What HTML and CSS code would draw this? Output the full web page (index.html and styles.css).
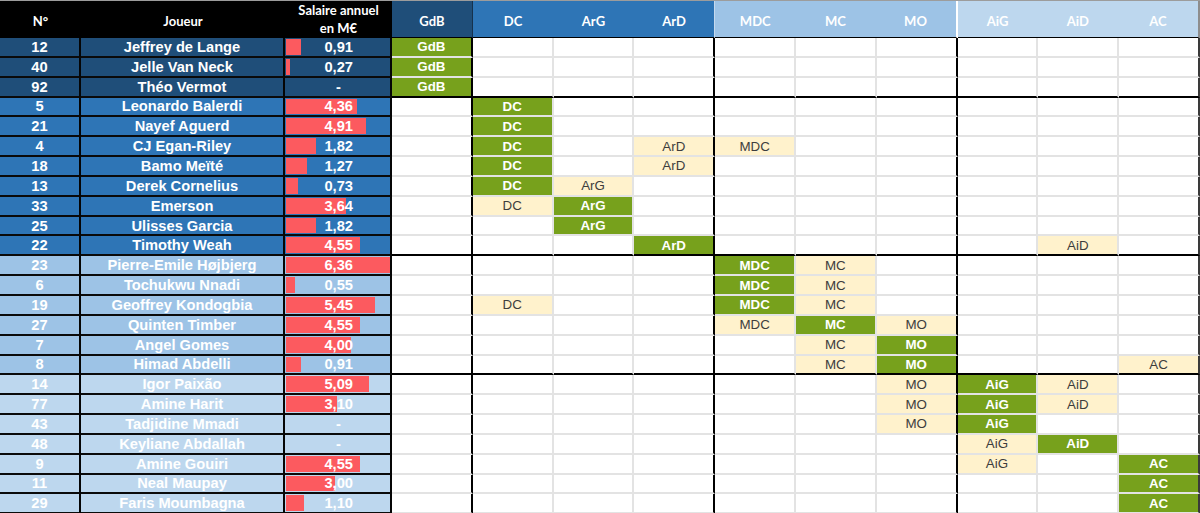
FILE: index.html
```html
<!DOCTYPE html>
<html lang="fr">
<head>
<meta charset="utf-8">
<title>Effectif OM</title>
<link rel="stylesheet" href="styles.css">
</head>
<body>
<div class="sheet">
  <div class="row head">
    <div class="hc">N°</div>
    <div class="hc">Joueur</div>
    <div class="hc sal-h">Salaire annuel<br>en M€</div>
    <div class="hc gdb-h">GdB</div>
    <div class="hg def-h"><span>DC</span><span>ArG</span><span>ArD</span></div>
    <div class="hg mid-h"><span>MDC</span><span>MC</span><span>MO</span></div>
    <div class="hg att-h"><span>AiG</span><span>AiD</span><span>AC</span></div>
  </div>

  <div class="row gk">
    <div class="c">12</div><div class="c">Jeffrey de Lange</div>
    <div class="c sal"><i class="bar" style="width:14.9px"></i><b>0,91</b></div>
    <div class="p g">GdB</div><div class="p"></div><div class="p"></div><div class="p"></div><div class="p"></div><div class="p"></div><div class="p"></div><div class="p"></div><div class="p"></div><div class="p"></div>
  </div>
  <div class="row gk">
    <div class="c">40</div><div class="c">Jelle Van Neck</div>
    <div class="c sal"><i class="bar" style="width:4.4px"></i><b>0,27</b></div>
    <div class="p g">GdB</div><div class="p"></div><div class="p"></div><div class="p"></div><div class="p"></div><div class="p"></div><div class="p"></div><div class="p"></div><div class="p"></div><div class="p"></div>
  </div>
  <div class="row gk end">
    <div class="c">92</div><div class="c">Théo Vermot</div>
    <div class="c sal"><b class="dash">-</b></div>
    <div class="p g">GdB</div><div class="p"></div><div class="p"></div><div class="p"></div><div class="p"></div><div class="p"></div><div class="p"></div><div class="p"></div><div class="p"></div><div class="p"></div>
  </div>

  <div class="row def">
    <div class="c">5</div><div class="c">Leonardo Balerdi</div>
    <div class="c sal"><i class="bar" style="width:71.3px"></i><b>4,36</b></div>
    <div class="p"></div><div class="p g">DC</div><div class="p"></div><div class="p"></div><div class="p"></div><div class="p"></div><div class="p"></div><div class="p"></div><div class="p"></div><div class="p"></div>
  </div>
  <div class="row def">
    <div class="c">21</div><div class="c">Nayef Aguerd</div>
    <div class="c sal"><i class="bar" style="width:80.3px"></i><b>4,91</b></div>
    <div class="p"></div><div class="p g">DC</div><div class="p"></div><div class="p"></div><div class="p"></div><div class="p"></div><div class="p"></div><div class="p"></div><div class="p"></div><div class="p"></div>
  </div>
  <div class="row def">
    <div class="c">4</div><div class="c">CJ Egan-Riley</div>
    <div class="c sal"><i class="bar" style="width:29.8px"></i><b>1,82</b></div>
    <div class="p"></div><div class="p g">DC</div><div class="p"></div><div class="p y">ArD</div><div class="p y">MDC</div><div class="p"></div><div class="p"></div><div class="p"></div><div class="p"></div><div class="p"></div>
  </div>
  <div class="row def">
    <div class="c">18</div><div class="c">Bamo Meïté</div>
    <div class="c sal"><i class="bar" style="width:20.8px"></i><b>1,27</b></div>
    <div class="p"></div><div class="p g">DC</div><div class="p"></div><div class="p y">ArD</div><div class="p"></div><div class="p"></div><div class="p"></div><div class="p"></div><div class="p"></div><div class="p"></div>
  </div>
  <div class="row def">
    <div class="c">13</div><div class="c">Derek Cornelius</div>
    <div class="c sal"><i class="bar" style="width:11.9px"></i><b>0,73</b></div>
    <div class="p"></div><div class="p g">DC</div><div class="p y">ArG</div><div class="p"></div><div class="p"></div><div class="p"></div><div class="p"></div><div class="p"></div><div class="p"></div><div class="p"></div>
  </div>
  <div class="row def">
    <div class="c">33</div><div class="c">Emerson</div>
    <div class="c sal"><i class="bar" style="width:59.5px"></i><b>3,64</b></div>
    <div class="p"></div><div class="p y">DC</div><div class="p g">ArG</div><div class="p"></div><div class="p"></div><div class="p"></div><div class="p"></div><div class="p"></div><div class="p"></div><div class="p"></div>
  </div>
  <div class="row def">
    <div class="c">25</div><div class="c">Ulisses Garcia</div>
    <div class="c sal"><i class="bar" style="width:29.8px"></i><b>1,82</b></div>
    <div class="p"></div><div class="p"></div><div class="p g">ArG</div><div class="p"></div><div class="p"></div><div class="p"></div><div class="p"></div><div class="p"></div><div class="p"></div><div class="p"></div>
  </div>
  <div class="row def end">
    <div class="c">22</div><div class="c">Timothy Weah</div>
    <div class="c sal"><i class="bar" style="width:74.4px"></i><b>4,55</b></div>
    <div class="p"></div><div class="p"></div><div class="p"></div><div class="p g">ArD</div><div class="p"></div><div class="p"></div><div class="p"></div><div class="p"></div><div class="p y">AiD</div><div class="p"></div>
  </div>

  <div class="row mid">
    <div class="c">23</div><div class="c">Pierre-Emile Højbjerg</div>
    <div class="c sal"><i class="bar" style="width:104px"></i><b>6,36</b></div>
    <div class="p"></div><div class="p"></div><div class="p"></div><div class="p"></div><div class="p g">MDC</div><div class="p y">MC</div><div class="p"></div><div class="p"></div><div class="p"></div><div class="p"></div>
  </div>
  <div class="row mid">
    <div class="c">6</div><div class="c">Tochukwu Nnadi</div>
    <div class="c sal"><i class="bar" style="width:9px"></i><b>0,55</b></div>
    <div class="p"></div><div class="p"></div><div class="p"></div><div class="p"></div><div class="p g">MDC</div><div class="p y">MC</div><div class="p"></div><div class="p"></div><div class="p"></div><div class="p"></div>
  </div>
  <div class="row mid">
    <div class="c">19</div><div class="c">Geoffrey Kondogbia</div>
    <div class="c sal"><i class="bar" style="width:89.1px"></i><b>5,45</b></div>
    <div class="p"></div><div class="p y">DC</div><div class="p"></div><div class="p"></div><div class="p g">MDC</div><div class="p y">MC</div><div class="p"></div><div class="p"></div><div class="p"></div><div class="p"></div>
  </div>
  <div class="row mid">
    <div class="c">27</div><div class="c">Quinten Timber</div>
    <div class="c sal"><i class="bar" style="width:74.4px"></i><b>4,55</b></div>
    <div class="p"></div><div class="p"></div><div class="p"></div><div class="p"></div><div class="p y">MDC</div><div class="p g">MC</div><div class="p y">MO</div><div class="p"></div><div class="p"></div><div class="p"></div>
  </div>
  <div class="row mid">
    <div class="c">7</div><div class="c">Angel Gomes</div>
    <div class="c sal"><i class="bar" style="width:65.4px"></i><b>4,00</b></div>
    <div class="p"></div><div class="p"></div><div class="p"></div><div class="p"></div><div class="p"></div><div class="p y">MC</div><div class="p g">MO</div><div class="p"></div><div class="p"></div><div class="p"></div>
  </div>
  <div class="row mid end">
    <div class="c">8</div><div class="c">Himad Abdelli</div>
    <div class="c sal"><i class="bar" style="width:14.9px"></i><b>0,91</b></div>
    <div class="p"></div><div class="p"></div><div class="p"></div><div class="p"></div><div class="p"></div><div class="p y">MC</div><div class="p g">MO</div><div class="p"></div><div class="p"></div><div class="p y">AC</div>
  </div>

  <div class="row att">
    <div class="c">14</div><div class="c">Igor Paixão</div>
    <div class="c sal"><i class="bar" style="width:83.2px"></i><b>5,09</b></div>
    <div class="p"></div><div class="p"></div><div class="p"></div><div class="p"></div><div class="p"></div><div class="p"></div><div class="p y">MO</div><div class="p g">AiG</div><div class="p y">AiD</div><div class="p"></div>
  </div>
  <div class="row att">
    <div class="c">77</div><div class="c">Amine Harit</div>
    <div class="c sal"><i class="bar" style="width:50.7px"></i><b>3,10</b></div>
    <div class="p"></div><div class="p"></div><div class="p"></div><div class="p"></div><div class="p"></div><div class="p"></div><div class="p y">MO</div><div class="p g">AiG</div><div class="p y">AiD</div><div class="p"></div>
  </div>
  <div class="row att">
    <div class="c">43</div><div class="c">Tadjidine Mmadi</div>
    <div class="c sal"><b class="dash">-</b></div>
    <div class="p"></div><div class="p"></div><div class="p"></div><div class="p"></div><div class="p"></div><div class="p"></div><div class="p y">MO</div><div class="p g">AiG</div><div class="p"></div><div class="p"></div>
  </div>
  <div class="row att">
    <div class="c">48</div><div class="c">Keyliane Abdallah</div>
    <div class="c sal"><b class="dash">-</b></div>
    <div class="p"></div><div class="p"></div><div class="p"></div><div class="p"></div><div class="p"></div><div class="p"></div><div class="p"></div><div class="p y">AiG</div><div class="p g">AiD</div><div class="p"></div>
  </div>
  <div class="row att">
    <div class="c">9</div><div class="c">Amine Gouiri</div>
    <div class="c sal"><i class="bar" style="width:74.4px"></i><b>4,55</b></div>
    <div class="p"></div><div class="p"></div><div class="p"></div><div class="p"></div><div class="p"></div><div class="p"></div><div class="p"></div><div class="p y">AiG</div><div class="p"></div><div class="p g">AC</div>
  </div>
  <div class="row att">
    <div class="c">11</div><div class="c">Neal Maupay</div>
    <div class="c sal"><i class="bar" style="width:49.1px"></i><b>3,00</b></div>
    <div class="p"></div><div class="p"></div><div class="p"></div><div class="p"></div><div class="p"></div><div class="p"></div><div class="p"></div><div class="p"></div><div class="p"></div><div class="p g">AC</div>
  </div>
  <div class="row att">
    <div class="c">29</div><div class="c">Faris Moumbagna</div>
    <div class="c sal"><i class="bar" style="width:18px"></i><b>1,10</b></div>
    <div class="p"></div><div class="p"></div><div class="p"></div><div class="p"></div><div class="p"></div><div class="p"></div><div class="p"></div><div class="p"></div><div class="p"></div><div class="p g">AC</div>
  </div>
</div>
</body>
</html>
```

FILE: styles.css
```css
html, body {
  margin: 0;
  padding: 0;
  overflow: hidden;
  background: #ffffff;
}

.sheet {
  width: 1200px;
  border-top: 1px solid #9c9c9c;
  font-family: "Liberation Sans", Arial, sans-serif;
}

.row {
  display: grid;
  grid-template-columns: 81px 204px 107px repeat(10, 80.8px);
  height: 19.85px;
}

.row.head {
  height: 37px;
}

/* header */
.hc, .hg {
  box-sizing: border-box;
  background: #000000;
  color: #ffffff;
  font-family: Lato, "Open Sans", sans-serif;
  font-weight: 700;
  font-size: 13px;
  border-bottom: 2px solid #000000;
  display: flex;
  align-items: center;
  justify-content: center;
  text-align: center;
  padding-top: 3px;
}

.sal-h {
  line-height: 18px;
  padding-top: 0;
}

.gdb-h {
  background: #1f4e79;
  border-right: 1px solid #16324d;
}

.hg {
  grid-column: span 3;
  justify-content: stretch;
}

.hg span {
  flex: 1;
  text-align: center;
}

.def-h {
  background: #2e75b6;
  border-right: 1px solid #c5d9ee;
}

.mid-h {
  background: #9dc3e6;
  border-right: 2px solid #ffffff;
}

.att-h {
  background: #bdd7ee;
  border-right: 2px solid #8d8d8d;
}

/* left block cells */
.c {
  box-sizing: border-box;
  border-right: 2px solid #050505;
  border-bottom: 2px solid #0a0a0a;
  color: #ffffff;
  font-weight: 700;
  font-size: 14.67px;
  display: flex;
  align-items: center;
  justify-content: center;
  white-space: nowrap;
}

.gk .c { background: #1f4e79; }
.def .c { background: #2e75b6; }
.mid .c { background: #9dc3e6; }
.att .c { background: #bdd7ee; }

.sal {
  position: relative;
  justify-content: flex-end;
  padding-right: 37px;
}

.sal b {
  position: relative;
  font-weight: 700;
}

.sal .dash {
  margin-right: 12px;
}

.bar {
  position: absolute;
  left: 1px;
  top: 1px;
  bottom: 1px;
  background: #fc5a5f;
}

/* position grid cells */
.p {
  box-sizing: border-box;
  background: #ffffff;
  border-right: 2px solid #e3e3e3;
  border-bottom: 2px solid #e3e3e3;
  font-size: 13.33px;
  display: flex;
  align-items: center;
  justify-content: center;
}

.p:nth-child(4),
.p:nth-child(7),
.p:nth-child(10) {
  border-right-color: #000000;
}

.p:nth-child(13) {
  border-right-color: #3a3a3a;
}

.end .p {
  border-bottom-color: #000000;
}

.p.g {
  background: #77a11c;
  color: #ffffff;
  font-weight: 700;
}

.p.y {
  background: #fff2cc;
  color: #3d3d3d;
}
```
